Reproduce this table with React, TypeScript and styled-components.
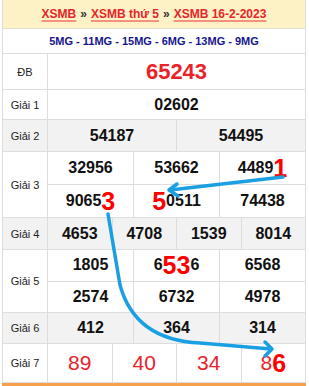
import styled, { createGlobalStyle } from "styled-components";

const GlobalStyle = createGlobalStyle`
  body {
    margin: 0;
    background: #fff;
    font-family: "Liberation Sans", Arial, sans-serif;
  }
`;

const Page = styled.div`
  position: relative;
  width: 309px;
  height: 386px;
  padding-left: 2px;
  box-sizing: border-box;
  overflow: hidden;
`;

const Board = styled.div`
  width: 304px;
  border-left: 1px solid #dddddd;
  box-sizing: border-box;
`;

const Header = styled.div`
  height: 29px;
  box-sizing: border-box;
  display: flex;
  align-items: center;
  justify-content: center;
  gap: 4px;
  background: #fcf2c6;
  border-right: 1px solid #dddddd;
  border-bottom: 1px solid #e4e0cc;
  font-size: 12px;
  font-weight: bold;
  color: #333;
`;

const Link = styled.a`
  color: #e8252a;
  text-decoration: underline;
  text-decoration-color: rgba(240, 80, 80, 0.6);
  text-decoration-thickness: 2px;
  text-underline-offset: 2px;
`;

const Codes = styled.div`
  height: 25px;
  box-sizing: border-box;
  display: flex;
  align-items: center;
  justify-content: center;
  border-right: 1px solid #dddddd;
  border-bottom: 1px solid #dddddd;
  font-size: 11px;
  font-weight: bold;
  color: #16168e;
`;

const Row = styled.div<{ $h: number; $grey?: boolean }>`
  display: grid;
  grid-template-columns: 45px 1fr;
  height: ${(p) => p.$h}px;
  background: ${(p) => (p.$grey ? "#f2f2f2" : "#ffffff")};
`;

const Label = styled.div`
  display: flex;
  align-items: center;
  justify-content: center;
  border-right: 1px solid #dddddd;
  border-bottom: 1px solid #dddddd;
  font-size: 11px;
  color: #222;
`;

const Numbers = styled.div<{ $cols: number; $rows?: number }>`
  display: grid;
  grid-template-columns: repeat(${(p) => p.$cols}, 1fr);
  grid-template-rows: repeat(${(p) => p.$rows || 1}, 1fr);
`;

const Num = styled.div<{ $size?: number; $red?: boolean; $light?: boolean }>`
  display: flex;
  align-items: center;
  justify-content: center;
  border-right: 1px solid #dddddd;
  border-bottom: 1px solid #dddddd;
  font-size: ${(p) => p.$size || 16}px;
  font-weight: ${(p) => (p.$light ? "normal" : "bold")};
  color: ${(p) => (p.$red ? "#ea2229" : "#111111")};
  white-space: nowrap;
`;

const Hit = styled.span`
  font-size: 25px;
  font-weight: bold;
  color: #ff0000;
`;

const BottomBar = styled.div`
  width: 304px;
  height: 3px;
  background: #f7a04c;
`;

const Arrows = styled.svg`
  position: absolute;
  left: 0;
  top: 0;
  pointer-events: none;
`;

const ArrowLine = styled.path`
  fill: none;
  stroke: #1a9fe3;
  stroke-width: 3.5;
  stroke-linecap: round;
  stroke-linejoin: round;
`;

const plain = (nums: string[]) => nums.map((n, i) => <Num key={i}>{n}</Num>);

export default function App() {
  return (
    <>
      <GlobalStyle />
      <Page>
        <Board>
          <Header>
            <Link>XSMB</Link>
            <span>»</span>
            <Link>XSMB thứ 5</Link>
            <span>»</span>
            <Link>XSMB 16-2-2023</Link>
          </Header>
          <Codes>5MG - 11MG - 15MG - 6MG - 13MG - 9MG</Codes>

          <Row $h={36}>
            <Label>ĐB</Label>
            <Numbers $cols={1}>
              <Num $size={22} $red>
                65243
              </Num>
            </Numbers>
          </Row>

          <Row $h={30}>
            <Label>Giải 1</Label>
            <Numbers $cols={1}>{plain(["02602"])}</Numbers>
          </Row>

          <Row $h={32} $grey>
            <Label>Giải 2</Label>
            <Numbers $cols={2}>{plain(["54187", "54495"])}</Numbers>
          </Row>

          <Row $h={66}>
            <Label>Giải 3</Label>
            <Numbers $cols={3} $rows={2}>
              <Num>32956</Num>
              <Num>53662</Num>
              <Num>
                4489<Hit>1</Hit>
              </Num>
              <Num>
                9065<Hit>3</Hit>
              </Num>
              <Num>
                <Hit>5</Hit>0511
              </Num>
              <Num>74438</Num>
            </Numbers>
          </Row>

          <Row $h={32} $grey>
            <Label>Giải 4</Label>
            <Numbers $cols={4}>{plain(["4653", "4708", "1539", "8014"])}</Numbers>
          </Row>

          <Row $h={63}>
            <Label>Giải 5</Label>
            <Numbers $cols={3} $rows={2}>
              <Num>1805</Num>
              <Num>
                6<Hit>53</Hit>6
              </Num>
              <Num>6568</Num>
              {plain(["2574", "6732", "4978"])}
            </Numbers>
          </Row>

          <Row $h={31} $grey>
            <Label>Giải 6</Label>
            <Numbers $cols={3}>{plain(["412", "364", "314"])}</Numbers>
          </Row>

          <Row $h={39}>
            <Label>Giải 7</Label>
            <Numbers $cols={4}>
              <Num $size={21} $red $light>
                89
              </Num>
              <Num $size={21} $red $light>
                40
              </Num>
              <Num $size={21} $red $light>
                34
              </Num>
              <Num $size={21} $red $light>
                8<Hit>6</Hit>
              </Num>
            </Numbers>
          </Row>
        </Board>
        <BottomBar />

        <Arrows width="309" height="386" viewBox="0 0 309 386">
          <ArrowLine d="M283 177 L170 190" />
          <ArrowLine d="M177 184 L169 190 L178 196" />
          <ArrowLine d="M108 214 L120 285 Q135 340 200 343 L271 349" />
          <ArrowLine d="M265 342 L272 349 L265 356" />
        </Arrows>
      </Page>
    </>
  );
}
